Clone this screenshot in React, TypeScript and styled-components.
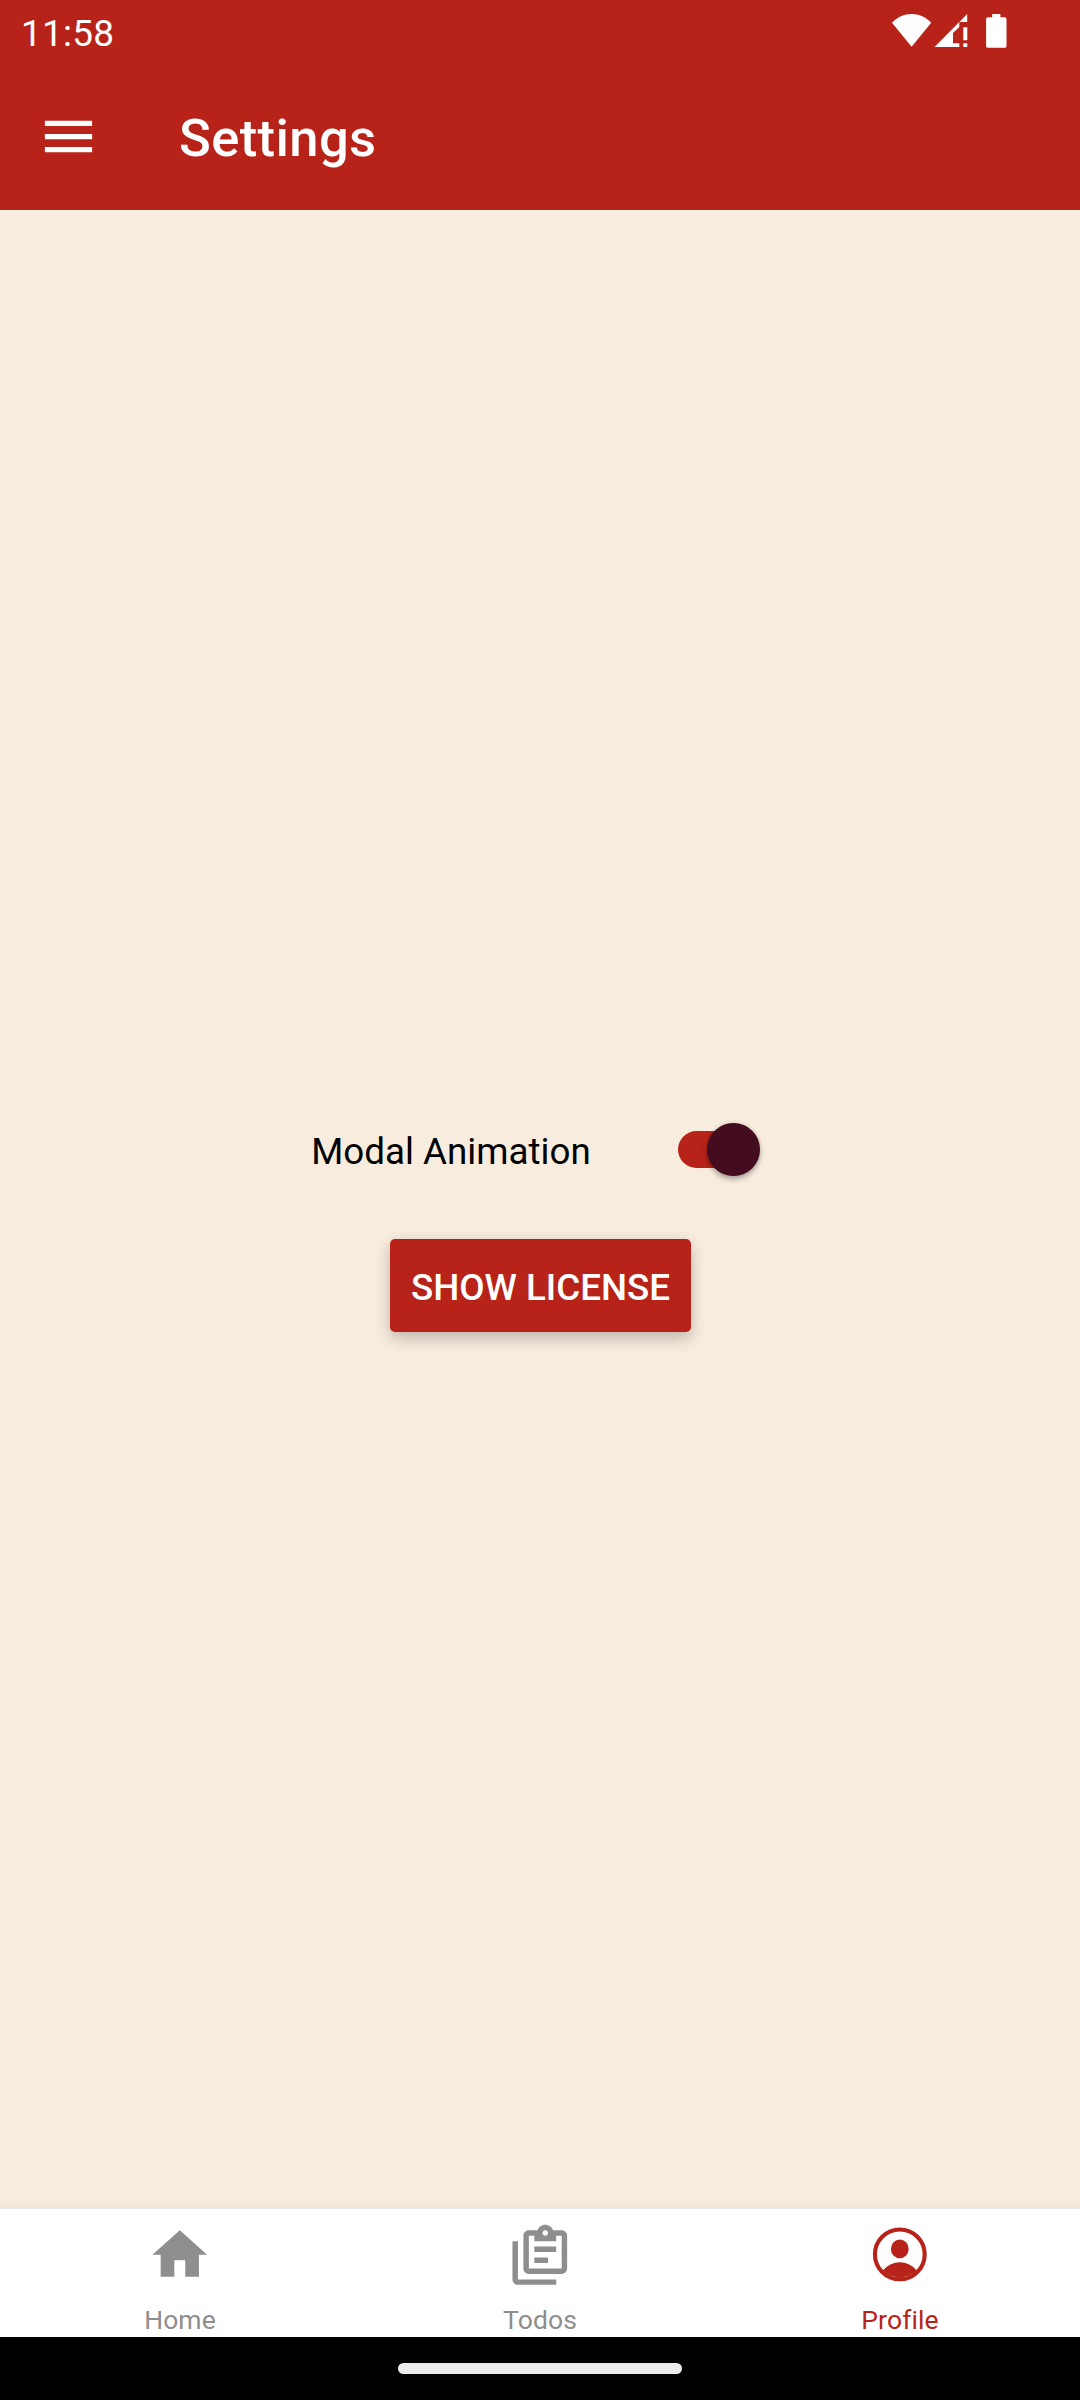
import React, { useState } from "react";
import styled, { createGlobalStyle } from "styled-components";

const colors = {
  primary: "#b72319",
  accent: "#440d1f",
  background: "#f8ecde",
  inactive: "#8e8e8f",
};

const GlobalStyle = createGlobalStyle`
  *, *::before, *::after { box-sizing: border-box; }
  body {
    margin: 0;
    font-family: Roboto, "Noto Sans", sans-serif;
    background: ${colors.background};
  }
  button { font: inherit; border: 0; padding: 0; background: none; cursor: pointer; }
  svg { display: block; }
`;

const Screen = styled.div`
  display: flex;
  flex-direction: column;
  width: 1080px;
  height: 2400px;
  background: ${colors.background};
  overflow: hidden;
`;

const Header = styled.header`
  flex: none;
  height: 210px;
  background: ${colors.primary};
  color: #fff;
`;

const StatusBar = styled.div`
  display: flex;
  justify-content: space-between;
  align-items: flex-start;
  height: 63px;
  padding: 13px 73px 0 21px;
`;

const Clock = styled.span`
  font-size: 37px;
  line-height: 42px;
  letter-spacing: 0.2px;
`;

const StatusIcons = styled.div`
  display: flex;
`;

const AppBar = styled.div`
  display: flex;
  align-items: center;
  height: 147px;
  padding-left: 37px;
`;

const MenuButton = styled.button`
  width: 63px;
  height: 63px;
  color: #fff;
`;

const Title = styled.h1`
  margin: 2px 0 0 79px;
  font-size: 52.5px;
  font-weight: 500;
  line-height: 62px;
  letter-spacing: 0.4px;
`;

const Content = styled.main`
  flex: 1;
  display: flex;
  flex-direction: column;
  align-items: center;
  padding-top: 913px;
`;

const SettingRow = styled.label`
  display: flex;
  align-items: center;
  height: 53px;
  margin-bottom: 63px;
  padding-right: 9px;
`;

const SettingLabel = styled.span`
  padding-top: 4px;
  font-size: 36.75px;
  line-height: 43px;
  color: #000;
`;

const SwitchTrack = styled.button<{ $on: boolean }>`
  display: flex;
  align-items: center;
  justify-content: ${(p) => (p.$on ? "flex-end" : "flex-start")};
  width: 82px;
  height: 37px;
  margin-left: 87px;
  border-radius: 19px;
  background: linear-gradient(
    to right,
    ${(p) => (p.$on ? colors.primary : "#b8b0a8")} 60px,
    transparent 60px
  );
`;

const SwitchThumb = styled.span`
  flex: none;
  width: 52.5px;
  height: 52.5px;
  border-radius: 50%;
  background: ${colors.accent};
  box-shadow: 0 4px 5px rgba(0, 0, 0, 0.24), 0 0 5px rgba(0, 0, 0, 0.14);
`;

const RaisedButton = styled.button`
  width: 301px;
  height: 93px;
  padding: 4px 0 0 1px;
  border-radius: 5px;
  background: ${colors.primary};
  color: #fff;
  font-size: 36.75px;
  font-weight: 500;
  box-shadow: 0 8px 16px rgba(0, 0, 0, 0.17), 0 1px 14px rgba(0, 0, 0, 0.08);
`;

const TabBar = styled.nav`
  flex: none;
  display: flex;
  height: 130px;
  border-top: 2px solid #ebebeb;
  background: #fff;
  box-shadow: 0 2px 12px rgba(0, 0, 0, 0.09);
`;

const Tab = styled.button<{ $active: boolean }>`
  flex: 1;
  display: flex;
  flex-direction: column;
  align-items: center;
  padding-top: 12.5px;
  color: ${(p) => (p.$active ? colors.primary : colors.inactive)};
`;

const TabLabel = styled.span`
  margin-top: 16.5px;
  font-size: 26.5px;
  line-height: 31px;
  letter-spacing: 0.1px;
`;

const GestureBar = styled.div`
  flex: none;
  display: flex;
  justify-content: center;
  height: 63px;
  padding-top: 26px;
  background: #000;
`;

const GesturePill = styled.div`
  width: 284px;
  height: 11px;
  border-radius: 6px;
  background: #ebebeb;
`;

const WifiIcon = () => (
  <svg width="42" height="36" viewBox="0 0 42 36" fill="#fff">
    <path d="M0 9.800C5.300 4.100 12.100 1 19.600 1s14.300 3.100 19.600 8.800L19.600 33.800Z" />
  </svg>
);

const SignalIcon = () => (
  <svg width="52" height="36" viewBox="0 0 52 36" fill="#fff">
    <path d="M0.500 34L33.200 1V9H25.300V14L19 20V30.300H25.300V34Z" />
    <path d="M29.300 14.200h4v13h-4zM29.300 30.300h4v3.700h-4z" />
  </svg>
);

const BatteryIcon = () => (
  <svg width="21" height="36" viewBox="0 0 21 36" fill="#fff">
    <path d="M6.200 1h8.200v3.300h4.200q1.900 0 1.900 1.900v26.700q0 1.900-1.900 1.900H2q-1.900 0-1.900-1.900V6.200q0-1.900 1.900-1.900h4.200z" />
  </svg>
);

const MenuIcon = () => (
  <svg width="63" height="63" viewBox="0 0 24 24" fill="currentColor">
    <path d="M3 6h18v2H3V6m0 5h18v2H3v-2m0 5h18v2H3v-2z" />
  </svg>
);

const TabIcon = ({ children }: { children: React.ReactNode }) => (
  <svg width="65.6" height="65.6" viewBox="0 0 24 24" fill="currentColor">
    {children}
  </svg>
);

const tabs = [
  { name: "Home", icon: <path d="M10 20v-6h4v6h5v-8h3L12 3 2 12h3v8h5z" /> },
  {
    name: "Todos",
    icon: (
      <path
        fillRule="evenodd"
        d="M4 7v14h14v2H4c-1.100 0-2-.900-2-2V7h2M20 3c1.100 0 2 .900 2 2v12c0 1.100-.900 2-2 2H8c-1.100 0-2-.900-2-2V5c0-1.100.900-2 2-2h3.180C11.600 1.840 12.700 1 14 1s2.400.840 2.820 2H20m-6 0c-.550 0-1 .450-1 1s.450 1 1 1 1-.450 1-1-.450-1-1-1m-4 4V5H8v12h12V5h-2v2h-8m5 8h-5v-2h5v2m3-4h-8V9h8v2z"
      />
    ),
  },
  {
    name: "Profile",
    icon: (
      <>
        <circle cx="12" cy="11.850" r="9.100" fill="none" stroke="currentColor" strokeWidth="1.500" />
        <ellipse cx="12" cy="9.850" rx="3.250" ry="3.450" />
        <path d="M5.800 17.750A7.900 7.900 0 0 1 18.200 17.750A8.900 8.900 0 0 1 5.800 17.750Z" />
      </>
    ),
  },
];

export default function App() {
  const [animated, setAnimated] = useState(true);
  const [active, setActive] = useState("Profile");

  return (
    <>
      <GlobalStyle />
      <Screen>
        <Header>
          <StatusBar>
            <Clock>11:58</Clock>
            <StatusIcons>
              <WifiIcon />
              <SignalIcon />
              <BatteryIcon />
            </StatusIcons>
          </StatusBar>
          <AppBar>
            <MenuButton aria-label="Menu">
              <MenuIcon />
            </MenuButton>
            <Title>Settings</Title>
          </AppBar>
        </Header>
        <Content>
          <SettingRow>
            <SettingLabel>Modal Animation</SettingLabel>
            <SwitchTrack
              role="switch"
              aria-checked={animated}
              $on={animated}
              onClick={() => setAnimated(!animated)}
            >
              <SwitchThumb />
            </SwitchTrack>
          </SettingRow>
          <RaisedButton>SHOW LICENSE</RaisedButton>
        </Content>
        <TabBar>
          {tabs.map((tab) => (
            <Tab key={tab.name} $active={tab.name === active} onClick={() => setActive(tab.name)}>
              <TabIcon>{tab.icon}</TabIcon>
              <TabLabel>{tab.name}</TabLabel>
            </Tab>
          ))}
        </TabBar>
        <GestureBar>
          <GesturePill />
        </GestureBar>
      </Screen>
    </>
  );
}
